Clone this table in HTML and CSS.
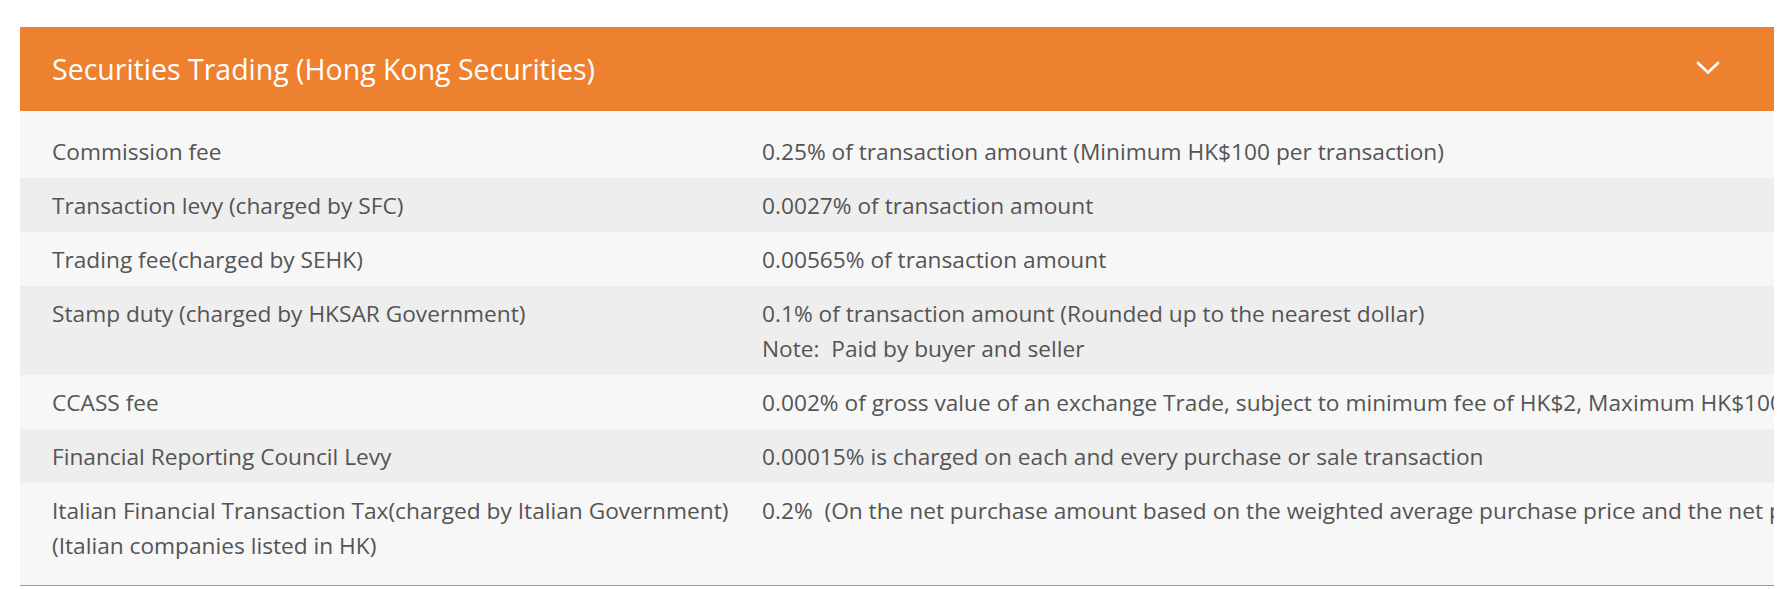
FILE: index.html
```html
<!DOCTYPE html>
<html lang="en">
<head>
<meta charset="utf-8">
<title>Securities Trading</title>
<link rel="stylesheet" href="styles.css">
</head>
<body>
<div class="page">
  <section class="panel">
    <header class="panel-head">
      <h2 class="panel-title">Securities Trading (Hong Kong Securities)</h2>
      <svg class="chevron" width="24" height="14" viewBox="0 0 24 14" aria-hidden="true">
        <polyline points="2,2 12,11.5 22,2" fill="none" stroke="#ffffff" stroke-width="2.6" stroke-linecap="round" stroke-linejoin="round"/>
      </svg>
    </header>
    <div class="fee-table">
      <div class="row">
        <div class="label">Commission fee</div>
        <div class="value">0.25% of transaction amount (Minimum HK$100 per transaction)</div>
      </div>
      <div class="row">
        <div class="label">Transaction levy (charged by SFC)</div>
        <div class="value">0.0027% of transaction amount</div>
      </div>
      <div class="row">
        <div class="label">Trading fee(charged by SEHK)</div>
        <div class="value">0.00565% of transaction amount</div>
      </div>
      <div class="row">
        <div class="label">Stamp duty (charged by HKSAR Government)</div>
        <div class="value">0.1% of transaction amount (Rounded up to the nearest dollar)<br>Note:&nbsp; Paid by buyer and seller</div>
      </div>
      <div class="row">
        <div class="label">CCASS fee</div>
        <div class="value">0.002% of gross value of an exchange Trade, subject to minimum fee of HK$2, Maximum HK$100</div>
      </div>
      <div class="row">
        <div class="label">Financial Reporting Council Levy</div>
        <div class="value">0.00015% is charged on each and every purchase or sale transaction</div>
      </div>
      <div class="row">
        <div class="label">Italian Financial Transaction Tax(charged by Italian Government)<br>(Italian companies listed in HK)</div>
        <div class="value">0.2%&nbsp; (On the net purchase amount based on the weighted average purchase price and the net purchase quantity)</div>
      </div>
    </div>
  </section>
</div>
</body>
</html>
```
FILE: styles.css
```css
html, body {
  margin: 0;
  padding: 0;
  background: #ffffff;
}

.page {
  padding: 27px 15px 0 20px;
  font-family: "Open Sans", "Noto Sans", "Liberation Sans", sans-serif;
}

.panel {
  overflow: hidden;
  border-bottom: 1px solid #9a9a9a;
}

.panel-head {
  height: 84px;
  background: #ee812f;
  display: flex;
  align-items: center;
  justify-content: space-between;
  padding: 0 54px 0 32px;
}

.panel-title {
  margin: 0;
  font-weight: 400;
  font-size: 28.5px;
  color: #ffffff;
}

.chevron {
  display: block;
  margin-top: -2px;
}

.fee-table {
  background: #f7f7f7;
  padding: 13px 0;
  font-size: 22.7px;
  line-height: 35px;
  color: #545454;
}

.row {
  display: grid;
  grid-template-columns: 710px 1fr;
  padding: 10px 0 9px 32px;
}

.row:nth-child(even) {
  background: #eeeeee;
}

.value {
  white-space: nowrap;
}
```
